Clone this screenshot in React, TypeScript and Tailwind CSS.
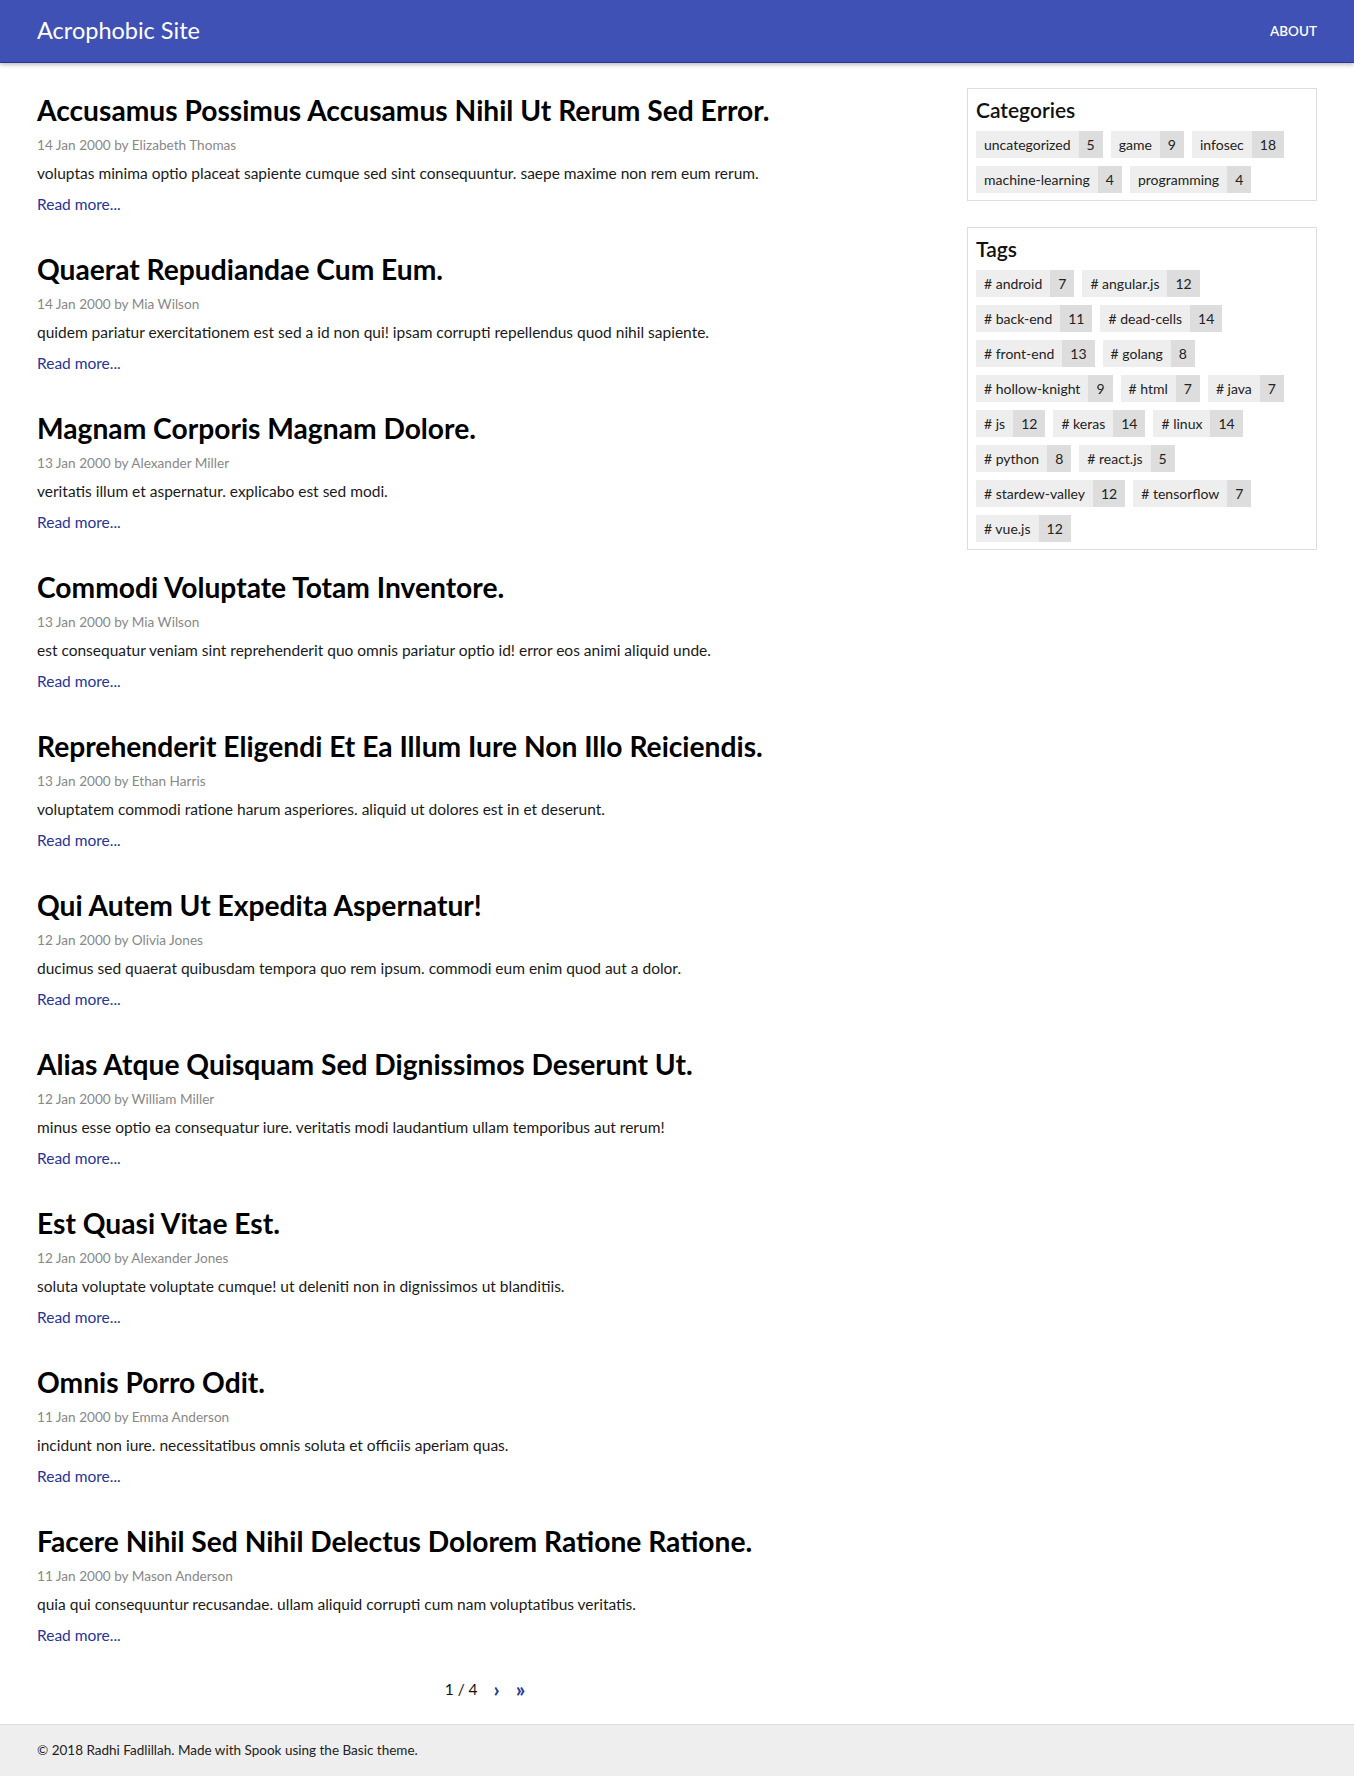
import React from 'react';

type Post = { title: string; date: string; author: string; excerpt: string };

const posts: Post[] = [
  { title: 'Accusamus Possimus Accusamus Nihil Ut Rerum Sed Error.', date: '14 Jan 2000', author: 'Elizabeth Thomas', excerpt: 'voluptas minima optio placeat sapiente cumque sed sint consequuntur. saepe maxime non rem eum rerum.' },
  { title: 'Quaerat Repudiandae Cum Eum.', date: '14 Jan 2000', author: 'Mia Wilson', excerpt: 'quidem pariatur exercitationem est sed a id non qui! ipsam corrupti repellendus quod nihil sapiente.' },
  { title: 'Magnam Corporis Magnam Dolore.', date: '13 Jan 2000', author: 'Alexander Miller', excerpt: 'veritatis illum et aspernatur. explicabo est sed modi.' },
  { title: 'Commodi Voluptate Totam Inventore.', date: '13 Jan 2000', author: 'Mia Wilson', excerpt: 'est consequatur veniam sint reprehenderit quo omnis pariatur optio id! error eos animi aliquid unde.' },
  { title: 'Reprehenderit Eligendi Et Ea Illum Iure Non Illo Reiciendis.', date: '13 Jan 2000', author: 'Ethan Harris', excerpt: 'voluptatem commodi ratione harum asperiores. aliquid ut dolores est in et deserunt.' },
  { title: 'Qui Autem Ut Expedita Aspernatur!', date: '12 Jan 2000', author: 'Olivia Jones', excerpt: 'ducimus sed quaerat quibusdam tempora quo rem ipsum. commodi eum enim quod aut a dolor.' },
  { title: 'Alias Atque Quisquam Sed Dignissimos Deserunt Ut.', date: '12 Jan 2000', author: 'William Miller', excerpt: 'minus esse optio ea consequatur iure. veritatis modi laudantium ullam temporibus aut rerum!' },
  { title: 'Est Quasi Vitae Est.', date: '12 Jan 2000', author: 'Alexander Jones', excerpt: 'soluta voluptate voluptate cumque! ut deleniti non in dignissimos ut blanditiis.' },
  { title: 'Omnis Porro Odit.', date: '11 Jan 2000', author: 'Emma Anderson', excerpt: 'incidunt non iure. necessitatibus omnis soluta et officiis aperiam quas.' },
  { title: 'Facere Nihil Sed Nihil Delectus Dolorem Ratione Ratione.', date: '11 Jan 2000', author: 'Mason Anderson', excerpt: 'quia qui consequuntur recusandae. ullam aliquid corrupti cum nam voluptatibus veritatis.' },
];

const categories: [string, number][] = [
  ['uncategorized', 5], ['game', 9], ['infosec', 18], ['machine-learning', 4], ['programming', 4],
];

const tags: [string, number][] = [
  ['android', 7], ['angular.js', 12], ['back-end', 11], ['dead-cells', 14], ['front-end', 13], ['golang', 8],
  ['hollow-knight', 9], ['html', 7], ['java', 7], ['js', 12], ['keras', 14], ['linux', 14], ['python', 8],
  ['react.js', 5], ['stardew-valley', 12], ['tensorflow', 7], ['vue.js', 12],
];

const Chip = ({ label, count }: { label: string; count: number }) => (
  <a href="#" className="flex h-[27px] items-stretch text-[14px] leading-[27px] text-[#222]">
    <span className="bg-[#eeeeee] px-[8px]">{label}</span>
    <span className="bg-[#dddddd] px-[8px]">{count}</span>
  </a>
);

const Widget = ({ title, children }: { title: string; children: React.ReactNode }) => (
  <div className="border border-[#dddddd] px-[8px] pt-[8px] pb-[7px]">
    <h3 className="mb-[8px] text-[21px] leading-[26px] font-semibold text-[#111]">{title}</h3>
    <div className="flex flex-wrap gap-[8px]">{children}</div>
  </div>
);

export default function App() {
  return (
    <div className="min-h-screen bg-white font-['Lato',sans-serif] text-[#222]">
      <header className="h-[63px] border-b border-[#283593] bg-[#3f51b5] shadow-[0_2px_4px_rgba(0,0,0,0.25)]">
        <div className="flex h-full items-center justify-between px-[37px]">
          <a href="#" className="text-[23.5px] text-white">Acrophobic Site</a>
          <a href="#" className="text-[13.5px] font-semibold text-white">ABOUT</a>
        </div>
      </header>

      <div className="flex items-start px-[37px]">
        <main className="w-[70%] pt-[29px]">
          {posts.map((p) => (
            <article key={p.title} className="mb-[36px]">
              <h2 className="text-[28.2px] leading-[36px] font-bold text-black">
                <a href="#">{p.title}</a>
              </h2>
              <div className="mt-[6px] text-[13.6px] leading-[22px] text-[#888888]">
                {p.date} by {p.author}
              </div>
              <p className="mt-[6px] text-[15.5px] leading-[22px] text-[#1a1a1a]">{p.excerpt}</p>
              <a href="#" className="mt-[9px] block text-[15.5px] leading-[22px] text-[#283593]">Read more...</a>
            </article>
          ))}
          <div className="-mt-[4px] flex items-center justify-center gap-[16px] pb-[24px] text-[15.5px] leading-[22px]">
            <span className="text-[#111]">1 / 4</span>
            <a href="#" className="text-[21px] font-bold text-[#283593]">›</a>
            <a href="#" className="text-[21px] font-bold text-[#283593]">»</a>
          </div>
        </main>

        <aside className="flex w-[30%] flex-col gap-[26px] pt-[25px] pl-[34px]">
          <Widget title="Categories">
            {categories.map(([n, c]) => (
              <Chip key={n} label={n} count={c} />
            ))}
          </Widget>
          <Widget title="Tags">
            {tags.map(([n, c]) => (
              <Chip key={n} label={`# ${n}`} count={c} />
            ))}
          </Widget>
        </aside>
      </div>

      <footer className="flex h-[52px] items-center border-t border-[#dddddd] bg-[#eeeeee] px-[37px] text-[13.5px] text-[#222]">
        © 2018 Radhi Fadlillah. Made with Spook using the Basic theme.
      </footer>
    </div>
  );
}
